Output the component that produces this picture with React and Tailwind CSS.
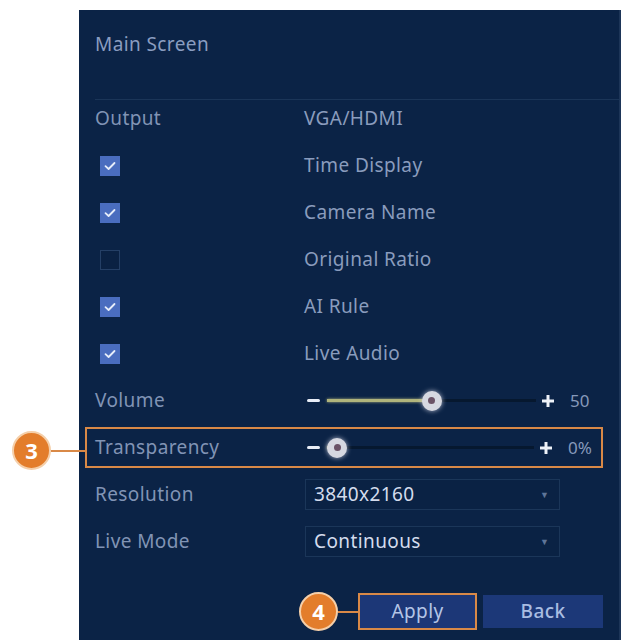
import React from 'react';

const font = { fontFamily: '"Noto Sans", "Open Sans", sans-serif' };

function Check({ on }) {
  return on ? (
    <div className="ml-[5px] w-[20px] h-[20px] bg-[#4a6dbf] flex items-center justify-center">
      <svg width="12" height="10" viewBox="0 0 12 10">
        <path d="M1.5 5.2 L4.6 8 L10.5 2" fill="none" stroke="#e6edfa" strokeWidth="1.8" strokeLinecap="round" strokeLinejoin="round" />
      </svg>
    </div>
  ) : (
    <div className="ml-[5px] w-[20px] h-[20px] border border-[#243f66] bg-[#0a2143]" />
  );
}

function Slider({ pct, value }) {
  // thumb travels between the two ends of the track
  const left = `calc(10px + (100% - 20px) * ${pct / 100})`;
  return (
    <div className="flex items-center w-full">
      <div className="ml-[3px] w-[13px] h-[3px] bg-[#e8edf6] rounded-sm" />
      <div className="relative flex-1 ml-[7px] mr-[5px] h-[20px] flex items-center">
        <div className="w-full h-[3px] bg-[#06182f]" />
        <div className="absolute h-[3px] bg-[#b0b47c] shadow-[0_0_3px_#b0b47c]" style={{ left: 0, width: left }} />
        <div
          className="absolute w-[20px] h-[20px] -ml-[10px] rounded-full bg-[#d6d8e1] shadow-[0_0_5px_rgba(220,220,235,0.8)] flex items-center justify-center"
          style={{ left }}
        >
          <div className="w-[7px] h-[7px] rounded-full bg-[#6a5266]" />
        </div>
      </div>
      <svg width="14" height="14" viewBox="0 0 14 14" className="shrink-0">
        <path d="M7 1 V13 M1 7 H13" stroke="#eef2f8" strokeWidth="3" />
      </svg>
      <div className="w-[48px] pl-[15px] text-[17px] text-[#8699ba]">{value}</div>
    </div>
  );
}

function Select({ text }) {
  return (
    <div className="ml-[1px] w-[255px] h-[31px] border border-[#1b3659] bg-[#0a2244] flex items-center justify-between pl-[8px] pr-[10px]">
      <span className="text-[19px] tracking-[0.4px] text-[#d4dced]">{text}</span>
      <span className="text-[9px] text-[#5f7598]">▼</span>
    </div>
  );
}

function Row({ label, children }) {
  return (
    <div className="h-[47px] flex items-center px-[16px]">
      <div className="w-[209px] shrink-0">{label}</div>
      <div className="flex-1 flex items-center">{children}</div>
    </div>
  );
}

function Callout({ n }) {
  return (
    <div className="w-[39px] h-[39px] rounded-full bg-[#e37d2b] border-2 border-[#f5cfa9] flex items-center justify-center text-white text-[22px] font-bold shrink-0">
      {n}
    </div>
  );
}

export default function App() {
  const labelCls = 'text-[19px] tracking-[0.4px] text-[#8194b5]';
  const valCls = 'text-[19px] tracking-[0.4px] text-[#8a9cbd]';
  const checks = [
    ['Time Display', true],
    ['Camera Name', true],
    ['Original Ratio', false],
    ['AI Rule', true],
    ['Live Audio', true],
  ];

  return (
    <div className="relative w-[623px] h-[640px] bg-white overflow-hidden" style={font}>
      <div className="ml-[79px] mt-[10px] w-[542px] h-[630px] bg-[#0b2346] border-r-2 border-[#1d3558]">
        <div className="h-[89px] pl-[16px] pt-[21px] text-[19px] tracking-[0.4px] leading-[26px] text-[#8a9dc0]">Main Screen</div>
        <div className="ml-[16px] h-px bg-[#1b3558]" />

        <div className="h-[42px] flex items-start pt-[5px] px-[16px]">
          <div className={`w-[209px] leading-[26px] ${labelCls}`}>Output</div>
          <div className={`leading-[26px] ${valCls}`}>VGA/HDMI</div>
        </div>

        {checks.map(([name, on]) => (
          <Row key={name} label={<Check on={on} />}>
            <span className={valCls}>{name}</span>
          </Row>
        ))}

        <Row label={<span className={labelCls}>Volume</span>}>
          <Slider pct={50} value="50" />
        </Row>

        <div className="h-[47px] flex items-center pl-[6px] pr-[16px]">
          <div className="w-full h-[41px] border-2 border-[#d98947] pl-[8px] flex items-center">
            <div className={`w-[209px] shrink-0 ${labelCls}`}>Transparency</div>
            <div className="flex-1 flex items-center">
              <Slider pct={0} value="0%" />
            </div>
          </div>
        </div>

        <Row label={<span className={labelCls}>Resolution</span>}>
          <Select text="3840x2160" />
        </Row>
        <Row label={<span className={labelCls}>Live Mode</span>}>
          <Select text="Continuous" />
        </Row>

        <div className="mt-[27px] flex items-center justify-end pr-[16px]">
          <Callout n="4" />
          <div className="w-[20px] h-[2px] bg-[#d98947]" />
          <div className="w-[119px] h-[37px] border-2 border-[#d98947] bg-[#1c3777] flex items-center justify-center text-[19px] tracking-[0.4px] text-[#b4c5e6]">
            Apply
          </div>
          <div className="ml-[6px] w-[120px] h-[33px] bg-[#1c3878] flex items-center justify-center text-[19px] tracking-[0.4px] font-medium text-[#a9bde2]">
            Back
          </div>
        </div>
      </div>

      {/* step marker pointing at the transparency row */}
      <div className="absolute left-[12px] top-[431px] flex items-center">
        <Callout n="3" />
        <div className="w-[35px] h-[2px] bg-[#d98947]" />
      </div>
    </div>
  );
}
